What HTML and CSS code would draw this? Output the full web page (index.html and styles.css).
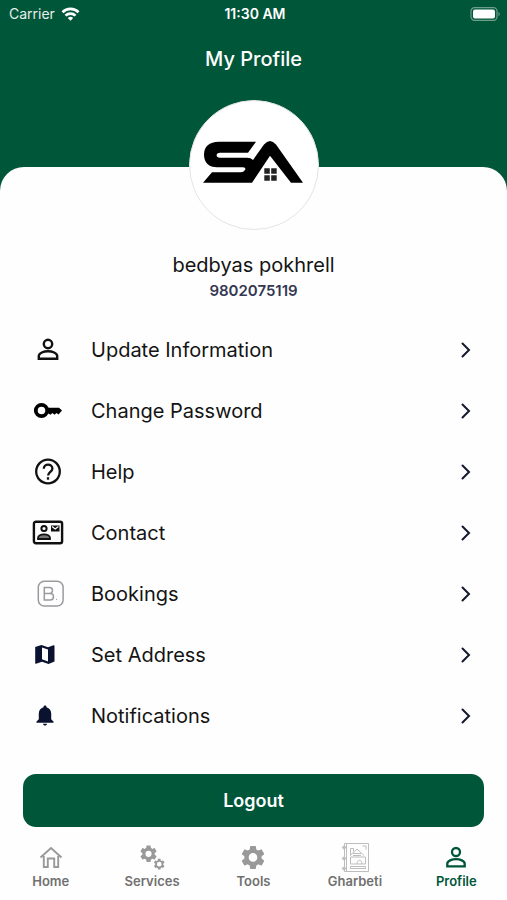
FILE: index.html
```html
<!DOCTYPE html>
<html lang="en">
<head>
    <meta charset="UTF-8">
    <meta name="viewport" content="width=device-width, initial-scale=1.0">
    <title>My Profile</title>
    <link rel="stylesheet" href="styles.css">
</head>
<body>
    <!-- Header -->
    <header class="header">
        <div class="status-bar">
            <div class="carrier">
                <span>Carrier</span>
                <svg width="19" height="14" viewBox="0 0 18 14" fill="none" stroke="#fff" stroke-width="2.7">
                    <path d="M1 5.2a11.4 11.4 0 0 1 16 0"/>
                    <path d="M4 8.6a7.1 7.1 0 0 1 10 0"/>
                    <path d="M6.3 11a3.8 3.8 0 0 1 5.4 0L9 13.8z" fill="#fff" stroke="none"/>
                </svg>
            </div>
            <span class="time">11:30 AM</span>
            <div class="battery">
                <svg width="31" height="14" viewBox="0 0 31 14">
                    <rect x="1" y="0.7" width="26" height="12.6" rx="3.6" fill="none" stroke="#6f9f8b" stroke-width="1.2"/>
                    <rect x="3" y="2.6" width="22" height="8.8" rx="2" fill="#fff"/>
                    <path d="M28.5 5v4c1.6-.6 1.6-3.4 0-4z" fill="#7fa997"/>
                </svg>
            </div>
        </div>
        <h1>My Profile</h1>
    </header>

    <!-- Profile Sheet -->
    <main class="sheet">
        <div class="avatar">
            <svg width="102" height="48" viewBox="0 0 102 48" role="img" aria-label="SA logo">
                <path d="M53 .7H16C6 .7 1 5.500 1 13.500C1 22 6 26.300 14 26.300H40Q43.500 26.500 42 29Q40.500 31.300 38 31.300H9L0 41.700H49L67 14.700L88 41.700H100L73 3.500Q67-3.500 61 3.500L50 19Q48 16.700 44 16.700H17C12.500 16.700 12.500 11.700 17 11.700H45Z"/>
                <path d="M61.300 27.300h5.500v5.500h-5.500zM68.200 27.300h5.500v5.500h-5.500zM61.300 34.200h5.500v5.500h-5.500zM68.200 34.200h5.500v5.500h-5.500z" fill="#222"/>
            </svg>
        </div>
        <h2 class="name">bedbyas pokhrell</h2>
        <p class="phone">9802075119</p>

        <ul class="menu">
            <li>
                <a href="#update">
                    <svg class="icon" viewBox="0 0 32 32" fill="none" stroke="#111" stroke-width="2.4">
                        <circle cx="16" cy="10" r="4.200"/>
                        <path d="M6.800 24.700v-2.700c0-3 5-4.800 9.200-4.800s9.200 1.800 9.200 4.800v2.700z"/>
                    </svg>
                    <span>Update Information</span>
                    <svg class="chevron" viewBox="0 0 12 18"><path d="M2.500 2.500L9 9l-6.500 6.500"/></svg>
                </a>
            </li>
            <li>
                <a href="#password">
                    <svg class="icon" viewBox="0 0 32 32">
                        <circle cx="9.500" cy="15.500" r="5.700" fill="none" stroke="#000" stroke-width="3.800"/>
                        <path d="M15 12.800h12l3 2.700-3.500 4-2-1.500-2 1.800-2-1.800-2 1.800-2-1.300H15z"/>
                    </svg>
                    <span>Change Password</span>
                    <svg class="chevron" viewBox="0 0 12 18"><path d="M2.500 2.500L9 9l-6.500 6.500"/></svg>
                </a>
            </li>
            <li>
                <a href="#help">
                    <svg class="icon" viewBox="0 0 32 32" fill="none" stroke="#111" stroke-width="2.300">
                        <circle cx="16" cy="15.500" r="11.800"/>
                        <path d="M11.800 12.800c0-5.500 8.600-5.300 8.600-.3 0 3.200-4.300 3.500-4.300 7"/>
                        <path d="M16 21.200v2.500"/>
                    </svg>
                    <span>Help</span>
                    <svg class="chevron" viewBox="0 0 12 18"><path d="M2.500 2.500L9 9l-6.500 6.500"/></svg>
                </a>
            </li>
            <li>
                <a href="#contact">
                    <svg class="icon" viewBox="0 0 32 32" fill="none" stroke="#111" stroke-width="2.400">
                        <rect x="1.900" y="4.700" width="28.200" height="21.600" rx="2"/>
                        <circle cx="12" cy="11.500" r="2.600" stroke-width="2"/>
                        <path d="M6 22v-1c0-2.300 3-3.600 6-3.600s6 1.300 6 3.600v1z" fill="#777" stroke-width="1.800"/>
                        <path d="M19 8.500h8.500v6H19z" fill="#111" stroke="none"/>
                        <path d="M20 9.500l3.200 2.500 3.200-2.500" stroke="#fff" stroke-width="1.200"/>
                    </svg>
                    <span>Contact</span>
                    <svg class="chevron" viewBox="0 0 12 18"><path d="M2.500 2.500L9 9l-6.500 6.500"/></svg>
                </a>
            </li>
            <li>
                <a href="#bookings">
                    <svg class="icon" viewBox="0 0 32 32" fill="none" stroke="#9a9b9f" stroke-width="1.500">
                        <rect x="6.300" y="3.300" width="24.800" height="24.800" rx="6"/>
                        <path d="M12.300 9.500h5.200a3 3 0 0 1 0 6h-5.200zM12.300 15.500h6a3.200 3.200 0 0 1 0 6.400h-6z"/>
                        <circle cx="24.500" cy="21.300" r=".6" stroke="none" fill="#9a9b9f"/>
                    </svg>
                    <span>Bookings</span>
                    <svg class="chevron" viewBox="0 0 12 18"><path d="M2.500 2.500L9 9l-6.500 6.500"/></svg>
                </a>
            </li>
            <li>
                <a href="#address">
                    <svg class="icon" viewBox="0 0 32 32" fill="#0a1230">
                        <path fill-rule="evenodd" d="M3.200 8l6.300-1.900 6.500 2.200 5.500-2c.6-.2 1 .1 1 .6v15.700L16.500 24.900 10 22.700l-6 2c-.5.200-.8 0-.8-.6zM10 8.500v11.800l6 2.100V10.600z"/>
                    </svg>
                    <span>Set Address</span>
                    <svg class="chevron" viewBox="0 0 12 18"><path d="M2.500 2.500L9 9l-6.500 6.500"/></svg>
                </a>
            </li>
            <li>
                <a href="#notifications">
                    <svg class="icon" viewBox="0 0 32 32" fill="#0a1230">
                        <path d="M13 5.500c1 0 1.500.7 1.500 1.700 3 .8 4.700 3.300 4.700 6.300v5.700l2.300 2.300v1.200h-17v-1.200l2.300-2.300v-5.700c0-3 1.700-5.500 4.700-6.300 0-1 .5-1.700 1.500-1.700zM11 23.700h4c0 2.400-4 2.400-4 0z"/>
                    </svg>
                    <span>Notifications</span>
                    <svg class="chevron" viewBox="0 0 12 18"><path d="M2.500 2.500L9 9l-6.500 6.500"/></svg>
                </a>
            </li>
        </ul>

        <button type="button" class="logout">Logout</button>
    </main>

    <!-- Bottom Navigation -->
    <nav class="tabs">
        <a href="#home">
            <svg viewBox="0 0 30 30" fill="none" stroke="currentColor" stroke-width="1.900">
                <path d="M4.500 14.500L15 5l10.500 9.500M7.800 13v11h4v-8.500h6.400V24h4V13"/>
            </svg>
            <span>Home</span>
        </a>
        <a href="#services">
            <svg viewBox="0 0 30 30" fill="currentColor">
                <g transform="translate(1.200 .5) scale(.86)">
                    <path d="M19.140 12.940c.04-.3.060-.61.060-.94s-.02-.64-.07-.94l2.030-1.580c.18-.14.230-.41.120-.61l-1.920-3.320c-.12-.22-.37-.29-.59-.22l-2.390.96c-.5-.38-1.030-.7-1.620-.94l-.36-2.540c-.04-.24-.24-.41-.48-.41h-3.840c-.24 0-.43.170-.47.410l-.36 2.540c-.59.240-1.130.570-1.620.94l-2.390-.96c-.22-.08-.47 0-.59.220L2.740 8.870c-.12.210-.08.470.12.610l2.030 1.580c-.05.3-.09.630-.09.940s.02.640.07.940l-2.030 1.580c-.18.140-.23.410-.12.610l1.920 3.320c.12.220.37.290.59.220l2.390-.96c.5.380 1.030.7 1.620.94l.36 2.540c.05.240.24.410.48.410h3.840c.24 0 .44-.17.47-.41l.36-2.540c.59-.24 1.130-.56 1.620-.94l2.390.96c.22.080.47 0 .59-.22l1.920-3.320c.12-.22.070-.47-.12-.61zM12 15.600a3.600 3.600 0 1 1 0-7.200 3.600 3.600 0 0 1 0 7.200z"/>
                </g>
                <g transform="translate(15.500 14.500) scale(.56)">
                    <path d="M19.140 12.940c.04-.3.060-.61.060-.94s-.02-.64-.07-.94l2.030-1.580c.18-.14.230-.41.120-.61l-1.920-3.320c-.12-.22-.37-.29-.59-.22l-2.390.96c-.5-.38-1.030-.7-1.620-.94l-.36-2.540c-.04-.24-.24-.41-.48-.41h-3.840c-.24 0-.43.170-.47.410l-.36 2.540c-.59.240-1.130.570-1.620.94l-2.390-.96c-.22-.08-.47 0-.59.220L2.740 8.870c-.12.210-.08.470.12.610l2.030 1.580c-.05.3-.09.630-.09.940s.02.640.07.940l-2.030 1.580c-.18.140-.23.410-.12.610l1.920 3.320c.12.220.37.290.59.220l2.390-.96c.5.380 1.030.7 1.620.94l.36 2.540c.05.240.24.410.48.410h3.840c.24 0 .44-.17.47-.41l.36-2.540c.59-.24 1.130-.56 1.620-.94l2.390.96c.22.080.47 0 .59-.22l1.920-3.320c.12-.22.070-.47-.12-.61zM12 16.200a4.200 4.200 0 1 1 0-8.400 4.200 4.200 0 0 1 0 8.400z"/>
                </g>
            </svg>
            <span>Services</span>
        </a>
        <a href="#tools">
            <svg viewBox="0 0 30 30" fill="currentColor">
                <g transform="translate(.6 0) scale(1.200)">
                    <path d="M19.140 12.940c.04-.3.060-.61.060-.94s-.02-.64-.07-.94l2.030-1.580c.18-.14.230-.41.120-.61l-1.920-3.320c-.12-.22-.37-.29-.59-.22l-2.390.96c-.5-.38-1.030-.7-1.620-.94l-.36-2.540c-.04-.24-.24-.41-.48-.41h-3.840c-.24 0-.43.170-.47.410l-.36 2.540c-.59.240-1.130.570-1.620.94l-2.390-.96c-.22-.08-.47 0-.59.220L2.740 8.870c-.12.210-.08.470.12.610l2.030 1.580c-.05.3-.09.630-.09.940s.02.640.07.940l-2.030 1.580c-.18.140-.23.410-.12.610l1.920 3.320c.12.220.37.290.59.220l2.390-.96c.5.380 1.030.7 1.620.94l.36 2.540c.05.240.24.410.48.410h3.840c.24 0 .44-.17.47-.41l.36-2.540c.59-.24 1.130-.56 1.620-.94l2.390.96c.22.080.47 0 .59-.22l1.920-3.320c.12-.22.070-.47-.12-.61zM12 15.600a3.600 3.600 0 1 1 0-7.200 3.600 3.600 0 0 1 0 7.200z"/>
                </g>
            </svg>
            <span>Tools</span>
        </a>
        <a href="#gharbeti">
            <svg viewBox="0 0 30 30" fill="none" stroke="#bdbdbd" stroke-width="1">
                <path d="M4.500.5h24v28h-24zM6.500.5v28"/>
                <path d="M2 4.500h5M2 15.500h5M2 25.500h5"/>
                <circle cx="4" cy="4.500" r="1.500"/>
                <circle cx="4" cy="15.500" r="1.500"/>
                <circle cx="4" cy="25.500" r="1.500"/>
                <path d="M10 12.500l7-6.500 7 6.500M10.500 12.500V5.500h3v3M10.500 14v7h15v-7zM17 21c0-5 5-5 5 0M13 10.500h8M13 12.500h8"/>
                <path d="M10.500 23.500h15v2h-15zM22.500 3h3.500v3.500"/>
            </svg>
            <span>Gharbeti</span>
        </a>
        <a href="#profile" class="active">
            <svg viewBox="0 0 30 30" fill="none" stroke="currentColor" stroke-width="2.300">
                <circle cx="15" cy="9" r="4"/>
                <path d="M6.300 23.300v-2.500c0-2.900 4.700-4.600 8.700-4.600s8.700 1.700 8.700 4.600v2.500z"/>
            </svg>
            <span>Profile</span>
        </a>
    </nav>
</body>
</html>
```
FILE: styles.css
```css
/* General Reset */
* {
    margin: 0;
    padding: 0;
    box-sizing: border-box;
}

body {
    font-family: Inter, "Liberation Sans", sans-serif;
    background-color: #fefefe;
    color: #141414;
    display: flex;
    flex-direction: column;
    min-height: 100vh;
}

a {
    color: inherit;
    text-decoration: none;
}

/* Header */
.header {
    background-color: #005639;
    color: #ffffff;
    padding-bottom: 100px;
}

.status-bar {
    display: grid;
    grid-template-columns: 1fr auto 1fr;
    align-items: center;
    height: 27px;
    padding: 0 6px 0 9px;
    font-size: 14px;
}

.carrier {
    display: flex;
    align-items: center;
    gap: 6px;
    color: #e6efeb;
}

.time {
    font-weight: 600;
}

.battery {
    display: flex;
    justify-content: flex-end;
}

.header h1 {
    font-size: 20px;
    font-weight: 500;
    line-height: 64px;
    text-align: center;
}

/* Profile Sheet */
.sheet {
    display: flex;
    flex-direction: column;
    background-color: #fefefe;
    border-radius: 24px 24px 0 0;
    margin-top: -24px;
    padding: 0 23px;
}

.avatar {
    display: flex;
    justify-content: center;
    align-items: center;
    align-self: center;
    width: 130px;
    height: 130px;
    margin-top: -67px;
    background-color: #ffffff;
    border: 1px solid #e4e4e4;
    border-radius: 50%;
}

.name {
    margin-top: 21px;
    font-size: 20px;
    font-weight: 400;
    line-height: 28px;
    text-align: center;
}

.phone {
    color: #343852;
    font-size: 15px;
    font-weight: 600;
    line-height: 24px;
    text-align: center;
}

.menu {
    list-style: none;
    margin-top: 16px;
}

.menu a {
    display: flex;
    align-items: center;
    height: 61px;
    padding: 0 12px 0 9px;
    font-size: 20px;
}

.menu span {
    flex: 1;
    margin-left: 27px;
}

.icon {
    width: 32px;
    height: 32px;
}

.chevron {
    width: 12px;
    height: 18px;
    fill: none;
    stroke: #14182c;
    stroke-width: 2;
    stroke-linecap: round;
}

.logout {
    height: 53px;
    margin-top: 28px;
    border: none;
    border-radius: 13px;
    background-color: #005639;
    color: #ffffff;
    font-family: inherit;
    font-size: 18px;
    font-weight: 600;
}

/* Bottom Navigation */
.tabs {
    display: grid;
    grid-template-columns: repeat(5, 1fr);
    margin-top: auto;
    padding-bottom: 11px;
    color: #707070;
    font-size: 13px;
    font-weight: 600;
    line-height: 16px;
}

.tabs a {
    display: flex;
    flex-direction: column;
    align-items: center;
}

.tabs svg {
    width: 30px;
    height: 30px;
    color: #999999;
}

.tabs .active,
.tabs .active svg {
    color: #005639;
}
```
